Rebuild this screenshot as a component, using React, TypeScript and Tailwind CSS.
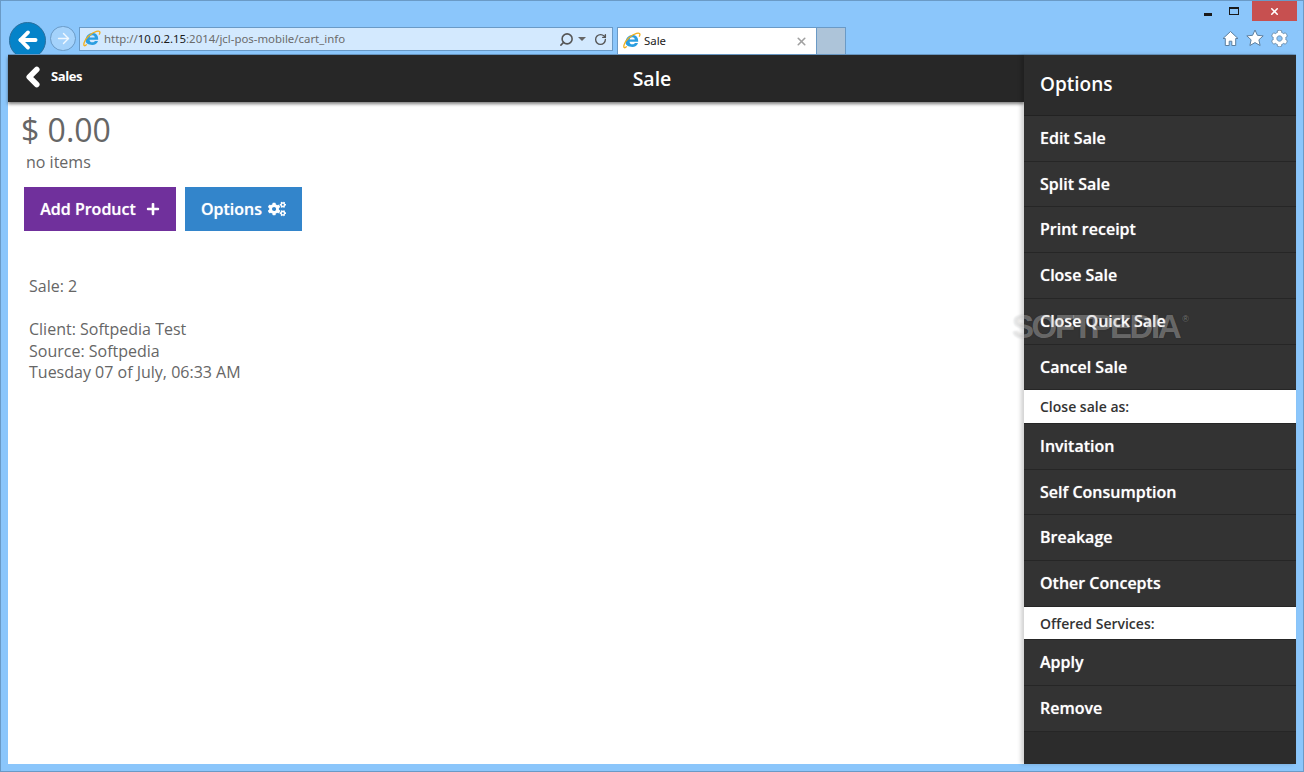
import React from 'react';
import { ArrowLeft, ArrowRight, ChevronLeft, RotateCw, Search, X } from 'lucide-react';
import { FaCog, FaCogs, FaPlus } from 'react-icons/fa';

const IeLogo = ({ size = 18 }: { size?: number }) => (
  <svg width={size} height={size} viewBox="0 0 20 20" fill="none">
    <path d="M2.800 11.200C3.200 6.800 6.300 3.400 10.700 3.400c4 0 6.400 2.900 6.200 7.300H7.300c.1 1.900 1.400 3 3.200 3 1.300 0 2.200-.5 2.800-1.500h3.400c-1 2.800-3.300 4.400-6.400 4.400C6.300 16.600 2.600 14.900 2.800 11.200zM7.400 8.200h5.700c-.2-1.500-1.200-2.300-2.800-2.300S7.700 6.700 7.400 8.200z" fill="#2b9ee0" />
    <path d="M4.200 16C1.500 18.800.3 17.300 1.300 14 2.800 9 9.500 3 15 1.500c3.500-1 4.700.7 3 3.700" stroke="#f2b01e" strokeWidth="1.500" />
  </svg>
);

const HomeIcon = () => (
  <svg width="17" height="17" viewBox="0 0 17 17">
    <path d="M8.500 1.500 1 8.500h2.300V15.500h3.900v-4.300h2.600v4.300h3.900V8.500H16z" fill="#fff" stroke="#5d7f9e" strokeWidth="1" strokeLinejoin="round" />
  </svg>
);

const StarIcon = () => (
  <svg width="18" height="18" viewBox="0 0 18 18">
    <path d="M9 1l2.400 5.300 5.800.6-4.300 3.900 1.200 5.700L9 13.600l-5.100 2.900 1.200-5.700L.8 6.900l5.800-.6z" fill="#fff" stroke="#5d7f9e" strokeWidth="1" strokeLinejoin="round" />
  </svg>
);

const MenuRow = ({ label }: { label: string }) => (
  <div className="flex h-[45.75px] items-center border-b border-[#262626] bg-[#333333] pb-[0.4px] pl-4 text-[16px] font-semibold text-white [text-shadow:0_0_1px_rgba(255,255,255,0.6)]">
    {label}
  </div>
);

const MenuDivider = ({ label }: { label: string }) => (
  <div className="flex h-[33.5px] items-center border-b border-[#262626] bg-white pl-4 text-[14px] font-semibold text-[#333333]">
    {label}
  </div>
);

export default function App() {
  return (
    <div className="relative flex h-[772px] w-[1304px] flex-col overflow-hidden border border-[#6a9ac6] bg-[#8bc6fb] font-['Open_Sans',sans-serif]">
      <div className="relative flex h-[53px] shrink-0 items-end">
        <div className="mb-[-5px] ml-2 flex h-[37px] w-[37px] shrink-0 items-center justify-center rounded-full border border-[#2a6f9e] bg-[#0583c9] pb-[2px]">
          <ArrowLeft size={26} strokeWidth={3.500} className="text-white" />
        </div>
        <div className="mb-[3px] ml-[4px] flex h-[25px] w-[26px] shrink-0 items-center justify-center rounded-full border border-[#6a9ac6] bg-[#a4d2fb]">
          <ArrowRight size={17} strokeWidth={2} className="text-[#f0f8ff]" />
        </div>
        <div className="mb-[3px] ml-[3px] flex h-[24px] w-[534px] shrink-0 items-center border border-[#6a9ac6] bg-[#d3e9fe] pl-[3px] pr-[5px] font-['Noto_Sans',sans-serif] text-[11.4px] text-[#6b6b6b]">
          <IeLogo />
          <span className="ml-[3px]">http://<span className="text-[#1a1a1a]">10.0.2.15</span>:2014/jcl-pos-mobile/cart_info</span>
          <Search size={15} strokeWidth={2.500} className="ml-auto -scale-x-100 text-[#555555]" />
          <span className="ml-[4px] h-0 w-0 border-x-[4px] border-t-[4px] border-x-transparent border-t-[#666666]" />
          <RotateCw size={13} strokeWidth={2.500} className="ml-[8px] text-[#555555]" />
        </div>
        <div className="ml-[4px] flex h-[27px] w-[200px] shrink-0 items-center border-x border-t border-[#6a9ac6] bg-white pl-[5px] pr-[8px] font-['Noto_Sans',sans-serif] text-[11.4px] text-[#1a1a1a]">
          <IeLogo />
          <span className="ml-[3px]">Sale</span>
          <X size={13} strokeWidth={3} className="ml-auto text-[#a0a0a0]" />
        </div>
        <div className="h-[27px] w-[29px] shrink-0 border-r border-t border-[#6a9ac6] bg-[#adc4d9]" />
        <div className="absolute right-[15px] top-[28px] flex items-center gap-[7px]">
          <HomeIcon />
          <StarIcon />
          <FaCog size={17} color="#fff" stroke="#5d7f9e" strokeWidth={24} />
        </div>
        <div className="absolute right-[6px] top-0 flex items-start">
          <div className="flex h-5 w-[26px] items-center justify-center pt-[6px]">
            <div className="h-[3px] w-2 bg-[#1a1a1a]" />
          </div>
          <div className="flex h-5 w-[26px] items-center justify-center">
            <div className="h-[8px] w-[10px] border border-t-2 border-[#1a1a1a]" />
          </div>
          <div className="ml-[5px] flex h-5 w-[45px] items-center justify-center bg-[#c75050]">
            <X size={11} strokeWidth={3.500} className="text-white" />
          </div>
        </div>
      </div>

      <div className="relative mx-[7px] flex h-[710px] shrink-0 border-t border-[#6a9ac6] bg-white">
        <div className="flex w-[1016px] shrink-0 flex-col">
          <div className="relative flex h-[47px] shrink-0 items-center justify-center bg-[#272727] pl-[272px] shadow-[0_2px_3px_rgba(0,0,0,0.5)]">
            <div className="absolute left-[10px] top-[7px] flex items-center">
              <ChevronLeft size={30} strokeWidth={4.500} className="text-white" />
              <span className="ml-[3px] text-[13px] font-bold tracking-[-0.4px] text-white">Sales</span>
            </div>
            <span className="text-[19.5px] font-semibold text-white">Sale</span>
          </div>
          <div className="pl-[13px] pt-[6px] text-[#666666]">
            <div className="text-[32px] leading-[43px]">$ 0.00</div>
            <div className="ml-[5px] text-[16px] leading-[22px]">no items</div>
            <div className="ml-[3px] mt-[14px] flex gap-[9px]">
              <button className="flex h-[44px] w-[152px] items-center justify-center gap-[10px] bg-[#70309c] text-[16px] font-semibold text-white [text-shadow:0_0_1px_rgba(255,255,255,0.6)]">
                Add Product
                <FaPlus size={14} />
              </button>
              <button className="flex h-[44px] w-[117px] items-center justify-center gap-[6px] bg-[#3385cb] text-[16px] font-semibold text-white [text-shadow:0_0_1px_rgba(255,255,255,0.6)]">
                Options
                <FaCogs size={18} />
              </button>
            </div>
            <div className="ml-2 mt-[45px] text-[16px] leading-[21.500px]">
              <div>Sale: 2</div>
              <div className="mt-[21.500px]">Client: Softpedia Test</div>
              <div>Source: Softpedia</div>
              <div>Tuesday 07 of July, 06:33 AM</div>
            </div>
          </div>
        </div>
        <div className="relative flex w-[272px] shrink-0 flex-col bg-[#2c2c2c] shadow-[-3px_0_4px_rgba(0,0,0,0.18)]">
          <div className="flex h-[60.8px] shrink-0 items-center border-b border-[#222222] pb-[2px] pl-4 text-[19px] font-semibold text-white">
            Options
          </div>
          <MenuRow label="Edit Sale" />
          <MenuRow label="Split Sale" />
          <MenuRow label="Print receipt" />
          <MenuRow label="Close Sale" />
          <MenuRow label="Close Quick Sale" />
          <MenuRow label="Cancel Sale" />
          <MenuDivider label="Close sale as:" />
          <MenuRow label="Invitation" />
          <MenuRow label="Self Consumption" />
          <MenuRow label="Breakage" />
          <MenuRow label="Other Concepts" />
          <MenuDivider label="Offered Services:" />
          <MenuRow label="Apply" />
          <MenuRow label="Remove" />
        </div>
      </div>
      <div className="pointer-events-none absolute left-[1011px] top-[306px] font-['Liberation_Sans',sans-serif] text-[33px] font-bold leading-[40px] tracking-[-2.4px] text-white/30 [text-shadow:0_0_2px_rgba(0,0,0,0.15)]">
        SOFTPEDIA<span className="ml-[3px] align-top text-[9px] font-normal leading-[24px] tracking-normal">®</span>
      </div>
    </div>
  );
}
